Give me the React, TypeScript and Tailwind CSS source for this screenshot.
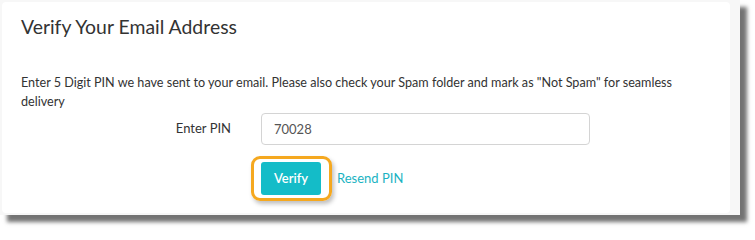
export default function App() {
  return (
    <div className="min-h-[231px] w-[755px] bg-white font-['Lato','Noto_Sans',sans-serif]">
      <div className="h-[215px] w-[740px] bg-[#f7f7f7] pl-[2px] pr-[10px] pt-[2px] pb-[2px] shadow-[7px_7px_4px_rgba(0,0,0,0.55)]">
        <div className="h-full rounded-[4px] bg-white px-[19px] pt-[11px]">
          <h1 className="text-[19.4px] leading-[28px] font-normal text-[#333]">Verify Your Email Address</h1>
          <p className="mt-[32px] text-[12.6px] leading-[19px] text-[#333]">
            Enter 5 Digit PIN we have sent to your email. Please also check your Spam folder and mark as "Not Spam" for seamless delivery
          </p>
          <div className="mt-[2px] flex items-center">
            <label className="w-[210px] text-right text-[13px] text-[#333]">Enter PIN</label>
            <input
              readOnly
              value="70028"
              className="ml-[30px] h-[32px] w-[329px] rounded-[4px] border border-[#d4d4d4] bg-white pl-[12px] text-[13px] text-[#555] outline-none"
            />
          </div>
          <div className="mt-[17px] flex items-center pl-[240px]">
            <div className="relative">
              <button className="h-[33px] w-[60px] rounded-[3px] bg-[#14bcc8] text-[13px] font-semibold text-white">
                Verify
              </button>
              <div className="pointer-events-none absolute -top-[6px] -bottom-[6px] -left-[10px] -right-[11px] rounded-[9px] border-[3px] border-[#f5a81f] shadow-[2px_3px_4px_rgba(0,0,0,0.25)]" />
            </div>
            <a className="ml-[16px] text-[13px] text-[#1ab3c2]">Resend PIN</a>
          </div>
        </div>
      </div>
    </div>
  )
}
